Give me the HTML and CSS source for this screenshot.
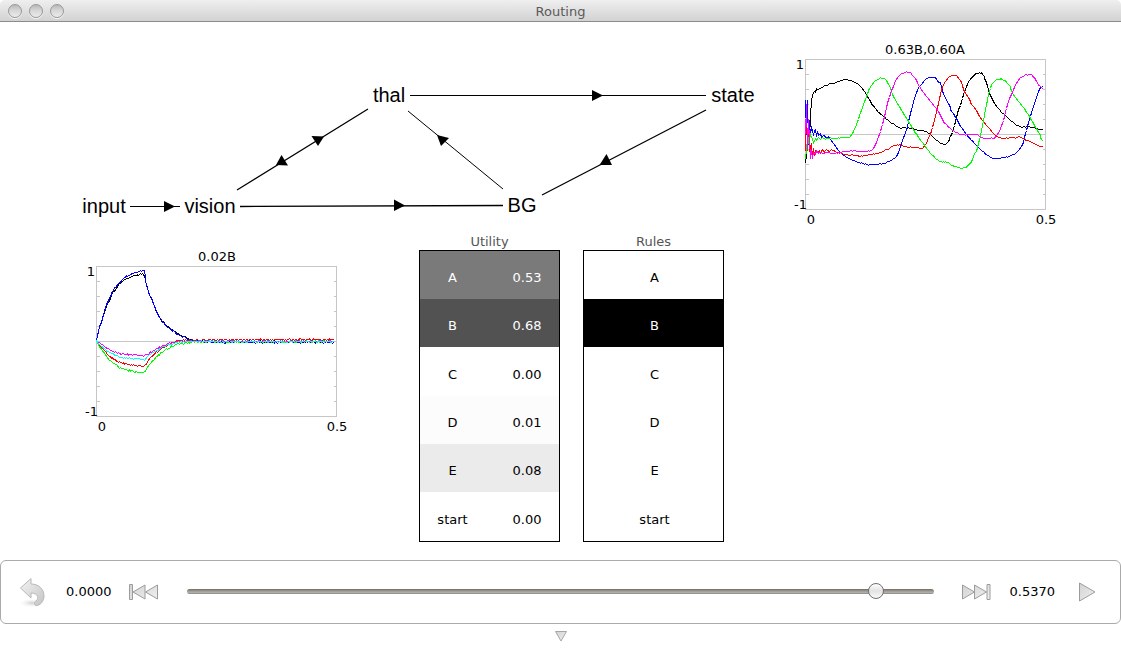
FILE: index.html
```html
<!DOCTYPE html>
<html lang="en">
<head>
<meta charset="utf-8">
<title>Routing</title>
<link rel="stylesheet" href="styles.css">
</head>
<body>
<header class="titlebar">
  <div class="lights">
    <button class="light" type="button" aria-label="Close"></button>
    <button class="light" type="button" aria-label="Minimize"></button>
    <button class="light" type="button" aria-label="Zoom"></button>
  </div>
  <h1 class="title">Routing</h1>
</header>

<main class="canvas">
  <svg class="network" aria-label="Network diagram">
    <g class="edges">
      <path d="M130 184.500H180M410 73.500H706"/>
      <path class="edge-heavy" d="M240 184.500L503 183.500M237 168L368 87M706 88L542 173"/>
      <path d="M503 167L408 89"/>
    </g>
    <g class="heads">
      <path d="M164 179V190L175 184.500Z"/>
      <path d="M592 68V79L603 73.500Z"/>
      <path d="M394 177.500V189L405 183.500Z"/>
      <path d="M276 143L281.500 133L288 143.500Z"/>
      <path d="M311.500 114L324 114.500L318 124Z"/>
      <path d="M437 113L449 116L441 124Z"/>
      <path d="M599.500 143L606.500 132L612 143Z"/>
    </g>
    <g class="nodes">
      <text x="104" y="191">input</text>
      <text x="210" y="191">vision</text>
      <text x="389" y="80">thal</text>
      <text x="733" y="80">state</text>
      <text x="522" y="190">BG</text>
    </g>
  </svg>

  <svg class="chart chart-vision" viewBox="0 0 280 200" data-series="vision" aria-label="vision plot">
    <text class="mid" x="141" y="19">0.02B</text>
    <g class="axes"></g>
    <g class="curves"></g>
    <text class="end" x="19" y="34">1</text>
    <text class="end" x="22" y="174">-1</text>
    <text class="mid" x="26" y="189">0</text>
    <text class="mid" x="261" y="189">0.5</text>
  </svg>

  <svg class="chart chart-state" viewBox="0 0 280 200" data-series="state" aria-label="state plot">
    <text class="mid" x="140" y="19">0.63B,0.60A</text>
    <g class="axes"></g>
    <g class="curves"></g>
    <text class="end" x="19" y="34">1</text>
    <text class="end" x="22" y="174">-1</text>
    <text class="mid" x="26" y="189">0</text>
    <text class="mid" x="261" y="189">0.5</text>
  </svg>

  <table class="grid grid-utility">
    <caption>Utility</caption>
    <tbody>
      <tr class="level-53"><th scope="row">A</th><td>0.53</td></tr>
      <tr class="level-68"><th scope="row">B</th><td>0.68</td></tr>
      <tr class="level-0"><th scope="row">C</th><td>0.00</td></tr>
      <tr class="level-1"><th scope="row">D</th><td>0.01</td></tr>
      <tr class="level-8"><th scope="row">E</th><td>0.08</td></tr>
      <tr class="level-0"><th scope="row">start</th><td>0.00</td></tr>
    </tbody>
  </table>

  <table class="grid grid-rules">
    <caption>Rules</caption>
    <tbody>
      <tr><td>A</td></tr>
      <tr class="active"><td>B</td></tr>
      <tr><td>C</td></tr>
      <tr><td>D</td></tr>
      <tr><td>E</td></tr>
      <tr><td>start</td></tr>
    </tbody>
  </table>
</main>

<section class="controls" aria-label="Playback">
  <button class="tool tool-reset" type="button" aria-label="Reset">
    <svg width="28" height="32" viewBox="0 0 28 32">
      <defs>
        <linearGradient id="metal" x1="0" y1="0" x2="1" y2="1">
          <stop offset="0" stop-color="#f4f4f4"/><stop offset="1" stop-color="#c4c4c4"/>
        </linearGradient>
        <linearGradient id="face" x1="0" y1="0" x2="1" y2="1">
          <stop offset="0" stop-color="#d2d2d2"/><stop offset="1" stop-color="#f0f0f0"/>
        </linearGradient>
        <radialGradient id="shade">
          <stop offset="0" stop-color="#cfcfcf"/><stop offset="1" stop-color="#fff" stop-opacity="0"/>
        </radialGradient>
      </defs>
      <ellipse cx="14" cy="27" rx="14" ry="5" fill="url(#shade)"/>
      <path d="M2.500 12L13 2.500V8C20 8 26 12.500 26 20C26 25.500 22 29.500 18 29.500C16 29 16 26 18 25C21.500 22.500 20 17 13 17V22Z" fill="url(#metal)" stroke="#b8b8b8"/>
    </svg>
  </button>
  <output class="time time-start">0.0000</output>
  <button class="tool tool-first" type="button" aria-label="Jump to start">
    <svg width="32" height="20" viewBox="0 0 32 20">
      <g fill="url(#face)" stroke="#9c9c9c">
        <path d="M1.500 2.500H4.500V17.500H1.500ZM17 3V17L5 10ZM29.500 3V17L17.500 10Z"/>
      </g>
    </svg>
  </button>
  <input class="slider" type="range" min="0" max="0.537" step="0.001" value="0.501" aria-label="Time">
  <button class="tool tool-last" type="button" aria-label="Jump to end">
    <svg width="32" height="20" viewBox="0 0 32 20">
      <g fill="url(#face)" stroke="#9c9c9c">
        <path d="M2.500 3V17L14.500 10ZM14.500 3V17L26.500 10ZM27 2.500H30V17.500H27Z"/>
      </g>
    </svg>
  </button>
  <output class="time time-end">0.5370</output>
  <button class="tool tool-play" type="button" aria-label="Play">
    <svg width="18" height="20" viewBox="0 0 18 20">
      <path d="M1.500 1V19L17 10Z" fill="url(#face)" stroke="#9c9c9c"/>
    </svg>
  </button>
</section>

<footer class="drawer">
  <button class="tool" type="button" aria-label="Toggle controls">
    <svg width="12" height="12" viewBox="0 0 12 12">
      <path d="M0.500 1.500H11.500L6 11Z" fill="url(#face)" stroke="#a6a6a6"/>
    </svg>
  </button>
</footer>
<script src="plots.js"></script>
</body>
</html>
```

FILE: plots.js
```js
// Each curve is a list of x,y knots at three units per pixel of the plot.
const SERIES = {
  state: [
    { color: '#000000', noise: 0.8, knots: '62,385 66,330 70,270 73,310 76,245 80,195 84,172 88,170 91,172 94,161 97,165 104,161 112,157 120,151 135,147 150,144 165,138 182,134 200,137 215,144 230,157 247,184 262,210 280,232 297,246 312,260 330,272 345,279 362,278 380,282 400,285 420,289 432,297 445,308 458,319 470,327 480,328 487,322 492,314 503,291 515,250 525,210 538,170 550,142 560,128 572,118 580,115 588,115 597,125 605,142 613,176 628,205 645,228 665,245 680,259 695,271 710,276 730,275 750,279 773,284' },
    { color: '#0000ff', noise: 0.8, knots: '62,196 64,300 67,196 70,330 74,255 77,305 80,275 84,300 87,285 90,283 93,306 97,288 101,303 106,294 110,307 115,300 122,308 130,306 145,326 160,346 175,361 190,369 205,377 225,384 250,390 275,388 295,386 315,378 330,368 340,352 352,316 363,285 375,235 388,190 400,160 410,147 425,130 438,126 452,129 465,145 475,178 495,218 515,251 530,278 548,302 565,322 582,341 600,357 615,367 635,371 655,368 675,364 690,356 703,344 715,322 725,285 737,243 748,205 760,170 767,157 773,154' },
    { color: '#ff0000', noise: 0.8, knots: '62,350 64,245 68,345 71,300 74,350 78,325 81,368 85,341 88,360 92,346 97,354 102,347 107,355 112,344 117,352 125,342 132,350 140,344 150,351 165,355 180,359 200,360 222,364 240,361 265,357 290,351 310,342 325,333 342,329 360,335 385,338 412,340 425,325 435,298 447,256 460,205 470,165 480,140 490,126 505,121 518,124 530,143 540,174 555,200 575,227 590,252 605,271 620,289 635,304 650,310 670,309 690,309 703,305 720,314 740,321 758,332 773,335' },
    { color: '#00ff00', noise: 0.8, knots: '62,372 66,315 69,325 73,285 77,302 82,311 86,327 90,310 95,318 100,306 106,314 112,308 120,313 130,308 150,311 170,308 193,307 203,295 215,270 230,225 245,185 258,152 270,136 285,128 300,133 313,152 325,185 345,222 370,260 390,293 412,324 432,350 455,371 468,381 488,382 507,395 528,401 545,396 560,380 573,350 585,303 597,240 610,180 620,148 632,136 648,132 662,137 675,153 683,175 705,205 730,240 750,276 765,302 773,317' },
    { color: '#ff00ff', noise: 0.8, knots: '62,300 65,210 68,345 71,255 75,370 79,347 82,371 86,352 91,358 95,347 101,355 106,351 114,357 124,352 140,355 155,354 175,350 200,347 225,350 248,350 263,344 274,323 285,290 298,245 308,205 320,167 332,138 345,118 360,111 378,114 392,130 405,157 425,184 448,214 463,235 475,260 490,276 505,288 525,299 548,300 570,297 585,306 600,311 628,309 642,290 655,255 665,220 678,180 690,150 703,130 720,119 738,119 750,133 760,150 773,160' }
  ],
  vision: [
    { color: '#000000', noise: 1.6, knots: '62,297 68,268 75,241 88,198 105,162 125,133 145,114 165,105 183,99 203,96 207,108 212,128 225,169 240,209 250,226 260,239 285,262 310,278 335,289 360,296 400,299 773,299' },
    { color: '#0000ff', noise: 1.6, knots: '62,297 68,268 75,241 88,195 105,157 125,127 145,107 165,96 185,90 204,86 207,105 212,128 225,169 240,209 250,226 260,239 285,264 310,280 335,290 360,297 400,301 773,301' },
    { color: '#ff0000', noise: 1.8, knots: '62,297 75,315 90,332 110,350 130,361 155,368 180,371 204,373 216,355 235,335 255,319 280,306 305,297 335,295 400,294 773,293' },
    { color: '#00ff00', noise: 1.8, knots: '62,297 75,322 90,341 110,361 130,377 155,385 180,389 204,391 216,372 235,350 255,332 280,317 305,307 335,303 370,300 773,299' },
    { color: '#ff00ff', noise: 1.4, knots: '62,297 75,307 90,318 110,328 135,335 165,338 190,340 204,341 216,335 235,325 255,313 280,304 305,300 335,297 773,298' },
    { color: '#00ffff', noise: 1.4, knots: '62,297 75,311 90,325 110,336 130,345 155,349 180,351 204,353 216,341 235,330 255,317 280,307 305,302 335,299 773,299' }
  ]
};

const NS = 'http://www.w3.org/2000/svg';

function addPath(parent, d, stroke) {
  const path = document.createElementNS(NS, 'path');
  path.setAttribute('d', d);
  path.setAttribute('stroke', stroke);
  parent.appendChild(path);
}

function generator(seed) {
  let state = seed;
  return () => {
    state = (state * 48271) % 2147483647;
    return state / 2147483647 - 0.5;
  };
}

function drawAxes(group) {
  let d = 'M20.5 24.5H260.5V174.5H20.5ZM20.5 99.5H260.5';
  for (let y = 39.5; y < 174; y += 15) {
    d += `M20.5 ${y}h3M260.5 ${y}h-3`;
  }
  addPath(group, d, '#c6c6c6');
}

// Samples once per pixel column and snaps each sample to the pixel grid.
function drawCurve(group, curve, seed) {
  const random = generator(seed);
  const knots = curve.knots.split(' ').map(pair => pair.split(',').map(Number));
  const points = [];
  for (let i = 0; i < knots.length - 1; i++) {
    const [x0, y0] = knots[i];
    const [x1, y1] = knots[i + 1];
    const steps = Math.max(1, Math.round((x1 - x0) / 3));
    for (let s = 0; s < steps; s++) {
      const t = s / steps;
      const x = (x0 + t * (x1 - x0)) / 3;
      const y = (y0 + t * (y1 - y0)) / 3 + random() * curve.noise;
      points.push([Math.floor(x) + 0.5, Math.floor(y) + 0.5]);
    }
  }
  const last = knots[knots.length - 1];
  points.push([last[0] / 3, Math.floor(last[1] / 3) + 0.5]);
  addPath(group, 'M' + points.map(point => point.join(' ')).join('L'), curve.color);
}

document.querySelectorAll('.chart').forEach(chart => {
  drawAxes(chart.querySelector('.axes'));
  const curves = chart.querySelector('.curves');
  SERIES[chart.dataset.series].forEach((curve, i) => drawCurve(curves, curve, 7919 + i * 10007));
});
```

FILE: styles.css
```css
* {
  box-sizing: border-box;
}

body {
  display: flex;
  flex-direction: column;
  min-height: 100vh;
  margin: 0;
  background: #fff;
  color: #000;
  font: 13px/16px "Lucida Grande", "DejaVu Sans", sans-serif;
}

button {
  padding: 0;
  border: 0;
  background: none;
}

/* Title bar */
.titlebar {
  display: grid;
  grid-template-columns: 1fr auto 1fr;
  align-items: center;
  height: 22px;
  border-bottom: 1px solid #8c8c8c;
  border-radius: 5px 5px 0 0;
  background: linear-gradient(#efefef, #d2d2d2);
}

.lights {
  display: flex;
  gap: 7px;
  padding-left: 8px;
}

.light {
  width: 14px;
  height: 14px;
  border: 1px solid #999;
  border-radius: 50%;
  background: linear-gradient(#b8b8b8, #d6d6d6 45%, #ececec);
  box-shadow: 0 1px 0 #f4f4f4;
}

.title {
  margin: 0;
  padding-top: 2px;
  color: #5a5a5a;
  font-size: 13px;
  font-weight: normal;
}

/* Free canvas: the network and its floating views */
.canvas {
  position: relative;
  flex: 1;
  min-height: 530px;
}

.network {
  position: absolute;
  top: 0;
  left: 0;
  width: 100%;
  height: 100%;
}

.edges {
  fill: none;
  stroke: #000;
  stroke-width: 1;
}

.edge-heavy {
  stroke-width: 1.3;
}

.nodes {
  font: 20px "Liberation Sans", Arial, sans-serif;
  text-anchor: middle;
}

.chart {
  position: absolute;
  width: 280px;
  height: 200px;
}

.chart-vision {
  left: 76px;
  top: 220px;
}

.chart-state {
  left: 785px;
  top: 13px;
}

.axes,
.curves {
  fill: none;
  shape-rendering: crispEdges;
}

.curves {
  stroke-linejoin: round;
}

.mid {
  text-anchor: middle;
}

.end {
  text-anchor: end;
}

.grid {
  position: absolute;
  top: 211px;
  width: 141px;
  border-spacing: 0;
  table-layout: fixed;
}

.grid caption {
  height: 17px;
  padding-top: 1px;
  color: #555;
}

.grid tbody {
  outline: 1px solid #000;
  outline-offset: -1px;
}

.grid-utility {
  left: 419px;
}

.grid-rules {
  left: 583px;
}

.grid th,
.grid td {
  height: 48px;
  padding: 6px 0 0;
  font-weight: normal;
  text-align: center;
}

.grid tr:first-child > *,
.grid tr:nth-child(3) > * {
  height: 49px;
}

.grid tr:last-child > * {
  height: 50px;
}

.grid th {
  width: 67px;
}

.grid-utility td {
  padding-left: 8px;
}

.grid-rules td {
  padding-left: 2px;
}

.level-53 {
  background: #7a7a7a;
  color: #fff;
}

.level-68 {
  background: #525252;
  color: #fff;
}

.level-1 {
  background: #fcfcfc;
}

.level-8 {
  background: #ebebeb;
}

.active {
  background: #000;
  color: #fff;
}

/* Playback controls */
.controls {
  display: flex;
  align-items: center;
  height: 64px;
  padding: 0 24px 0 17px;
  border: 1px solid #aaa;
  border-radius: 6px;
}

.tool {
  display: flex;
  flex: none;
}

.time {
  flex: none;
}

.time-start {
  margin: 0 16px 0 20px;
}

.time-end {
  margin: 0 23px 0 18px;
}

.slider {
  flex: 1;
  min-width: 0;
  height: 18px;
  margin: 0 26px 2px 27px;
  appearance: none;
  background: none;
}

.slider::-webkit-slider-runnable-track {
  height: 5px;
  border-radius: 3px;
  background: linear-gradient(#706b64, #a19d96 45%, #b3b0aa 75%, #85817b);
}

.slider::-webkit-slider-thumb {
  width: 16px;
  height: 16px;
  margin-top: -6px;
  appearance: none;
  border: 1px solid #6f6f6f;
  border-radius: 50%;
  background: linear-gradient(#fff, #e2e2e2 50%, #fafafa);
}

.drawer {
  display: flex;
  align-items: flex-start;
  justify-content: center;
  height: 24px;
  padding-top: 6px;
}
```
